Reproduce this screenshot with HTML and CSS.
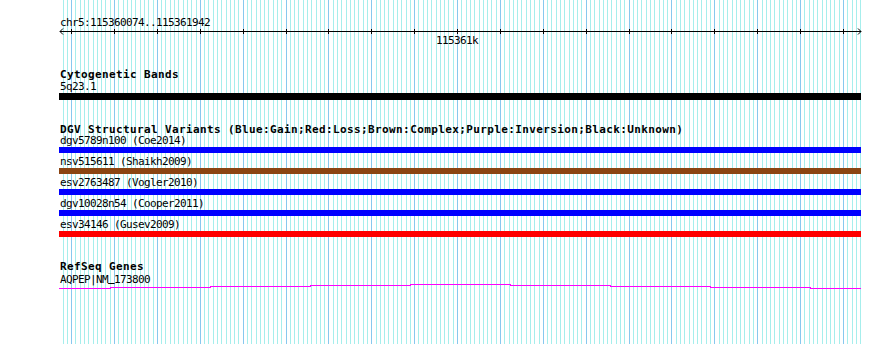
FILE: index.html
```html
<!DOCTYPE html>
<html lang="en">
<head>
<meta charset="utf-8">
<title>GBrowse panel</title>
<link rel="stylesheet" href="styles.css">
</head>
<body>
<div class="panel">
  <svg class="grid" width="890" height="344" viewBox="0 0 890 344" shape-rendering="crispEdges">
    <path class="grid-minor" d=""/>
    <path class="grid-major" d=""/>
  </svg>
  <div class="tracks">
    <div class="ruler">
      <div class="txt seqid">chr5:115360074..115361942</div>
      <svg class="axis" width="802" height="5" viewBox="0 0 802 5" shape-rendering="crispEdges">
        <path class="axis-line" d="M1 2.5H802"/>
        <path class="axis-ticks" d=""/>
        <path class="axis-arrow" d="M4 -0.5L1 2.5L4 5.5M799 -0.5L802 2.5L799 5.5" shape-rendering="auto"/>
      </svg>
      <div class="txt tick-label">115361k</div>
    </div>

    <section class="track">
      <h2 class="track-title cyto-title">Cytogenetic Bands</h2>
      <div class="feature">
        <div class="txt">5q23.1</div>
        <div class="bar bar-band"></div>
      </div>
    </section>

    <section class="track">
      <h2 class="track-title">DGV Structural Variants (Blue:Gain;Red:Loss;Brown:Complex;Purple:Inversion;Black:Unknown)</h2>
      <div class="feature">
        <div class="txt">dgv5789n100 (Coe2014)</div>
        <div class="bar bar-sv bar-gain"></div>
      </div>
      <div class="feature">
        <div class="txt">nsv515611 (Shaikh2009)</div>
        <div class="bar bar-sv bar-complex"></div>
      </div>
      <div class="feature">
        <div class="txt">esv2763487 (Vogler2010)</div>
        <div class="bar bar-sv bar-gain"></div>
      </div>
      <div class="feature">
        <div class="txt">dgv10028n54 (Cooper2011)</div>
        <div class="bar bar-sv bar-gain"></div>
      </div>
      <div class="feature">
        <div class="txt">esv34146 (Gusev2009)</div>
        <div class="bar bar-sv bar-loss"></div>
      </div>
    </section>

    <section class="track">
      <h2 class="track-title">RefSeq Genes</h2>
      <div class="feature">
        <div class="txt">AQPEP|NM<span class="us">_</span>173800</div>
        <svg class="gene" width="802" height="5" viewBox="0 0 802 5" shape-rendering="crispEdges">
          <path d="M0 4.5H51V3.5H151V2.5H251V1.5H351V0.5H451V1.5H551V2.5H651V3.5H751V4.5H802"/>
        </svg>
      </div>
    </section>
  </div>
</div>
<script src="script.js"></script>
</body>
</html>
```

FILE: styles.css
```css
html, body {
  margin: 0;
  padding: 0;
  background: #ffffff;
}

.panel {
  position: relative;
  width: 890px;
  height: 344px;
  overflow: hidden;
  background: #ffffff;
}

.grid {
  position: absolute;
  left: 0;
  top: 0;
}

.grid-minor {
  stroke: #a6eeec;
  stroke-width: 1;
  fill: none;
}

.grid-major {
  stroke: #88c8ee;
  stroke-width: 1;
  fill: none;
}

.tracks {
  position: relative;
  padding: 16px 0 0 59px;
  width: 802px;
}

.txt {
  font-family: "DejaVu Sans Mono", "Liberation Mono", monospace;
  font-size: 11px;
  line-height: 13px;
  height: 13px;
  letter-spacing: -0.62px;
  color: #000;
  padding-left: 1px;
  white-space: pre;
}

.us {
  font-weight: bold;
  vertical-align: 2px;
}

.axis {
  display: block;
  overflow: visible;
}

.axis-line,
.axis-ticks,
.axis-arrow {
  stroke: #000;
  stroke-width: 1;
  fill: none;
}

.tick-label {
  padding-left: 377px;
}

.track {
  margin-top: 23px;
}

.ruler + .track {
  margin-top: 21px;
}

.track-title {
  margin: 0;
  font-family: "DejaVu Sans Mono", "Liberation Mono", monospace;
  font-weight: bold;
  font-size: 11px;
  line-height: 13px;
  height: 11px;
  letter-spacing: 0.38px;
  padding-left: 1px;
  color: #000;
  white-space: pre;
}

.cyto-title {
  height: 12px;
}

.feature + .feature {
  margin-top: 2px;
}

.bar {
  width: 802px;
}

.bar-band {
  height: 7px;
  background: #000000;
}

.bar-sv {
  height: 6px;
}

.bar-gain {
  background: #0000ff;
}

.bar-complex {
  background: #8b4513;
}

.bar-loss {
  background: #ff0000;
}

.gene {
  display: block;
}

.gene path {
  stroke: #ff00ff;
  stroke-width: 1;
  fill: none;
}
```

FILE: script.js
```js
(function () {
  var x0 = 71.15;
  var step = 4.288;
  var minor = [];
  var major = [];
  var ticks = [];
  for (var j = -4; j < 200; j++) {
    var x = x0 + step * j;
    if (x > 861) break;
    if (x < 58.5) continue;
    var px = Math.round(x) + 0.5;
    if (j % 10 === 0) {
      major.push('M' + px + ' 0V344');
      var tx = px - 59;
      ticks.push('M' + tx + ' 0V5');
    } else {
      minor.push('M' + px + ' 0V344');
    }
  }
  document.querySelector('.grid-minor').setAttribute('d', minor.join(''));
  document.querySelector('.grid-major').setAttribute('d', major.join(''));
  document.querySelector('.axis-ticks').setAttribute('d', ticks.join(''));
})();
```
